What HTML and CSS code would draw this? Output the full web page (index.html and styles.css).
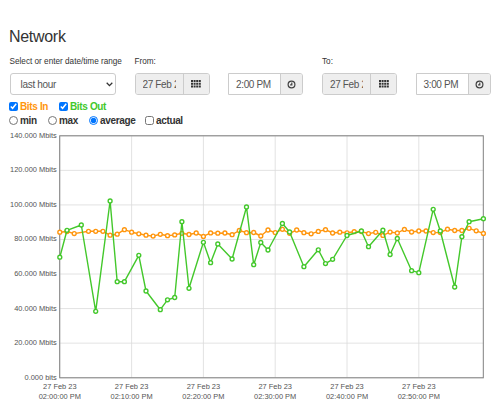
FILE: index.html
```html
<!DOCTYPE html>
<html lang="en">
<head>
    <meta charset="UTF-8">
    <meta name="viewport" content="width=device-width, initial-scale=1.0">
    <title>Network</title>
    <link rel="stylesheet" href="styles.css">
</head>
<body>
    <h2 class="title">Network</h2>

    <div class="range-row">
        <div class="range-column range-select">
            <label for="range">Select or enter date/time range</label>
            <div class="select-box" id="range">
                <span>last hour</span>
                <svg class="chevron" width="7" height="5" viewBox="0 0 7 5"><path d="M0.7 0.8 L3.5 3.6 L6.3 0.8"/></svg>
            </div>
        </div>
        <div class="range-column range-date">
            <label>From:</label>
            <div class="inputs">
                <div class="input-group">
                    <div class="field date"><span>27 Feb 2023</span></div>
                    <div class="addon">
                        <svg width="10" height="8" viewBox="0 0 10 8"><path d="M0 0h2v2H0zM2.6 0h2v2h-2zM5.2 0h2v2h-2zM7.8 0h2v2h-2zM0 2.7h2v2H0zM2.6 2.7h2v2h-2zM5.2 2.7h2v2h-2zM7.8 2.7h2v2h-2zM0 5.4h2v2H0zM2.6 5.4h2v2h-2zM5.2 5.4h2v2h-2zM7.8 5.4h2v2h-2z"/></svg>
                    </div>
                </div>
                <div class="input-group time-group">
                    <div class="field time"><span>2:00 PM</span></div>
                    <div class="addon time-addon">
                        <svg class="clock" width="9" height="9" viewBox="0 0 9 9"><circle cx="4.5" cy="4.5" r="3.4"/><path d="M4.8 2.5v2.3H3.1"/></svg>
                    </div>
                </div>
            </div>
        </div>
        <div class="range-column">
            <label>To:</label>
            <div class="inputs">
                <div class="input-group">
                    <div class="field date"><span>27 Feb 2023</span></div>
                    <div class="addon">
                        <svg width="10" height="8" viewBox="0 0 10 8"><path d="M0 0h2v2H0zM2.6 0h2v2h-2zM5.2 0h2v2h-2zM7.8 0h2v2h-2zM0 2.7h2v2H0zM2.6 2.7h2v2h-2zM5.2 2.7h2v2h-2zM7.8 2.7h2v2h-2zM0 5.4h2v2H0zM2.6 5.4h2v2h-2zM5.2 5.4h2v2h-2zM7.8 5.4h2v2h-2z"/></svg>
                    </div>
                </div>
                <div class="input-group time-group">
                    <div class="field time"><span>3:00 PM</span></div>
                    <div class="addon time-addon">
                        <svg class="clock" width="9" height="9" viewBox="0 0 9 9"><circle cx="4.5" cy="4.5" r="3.4"/><path d="M4.8 2.5v2.3H3.1"/></svg>
                    </div>
                </div>
            </div>
        </div>
    </div>

    <div class="checks series-checks">
        <label class="bits-in"><input type="checkbox" checked>Bits In</label>
        <label class="bits-out"><input type="checkbox" checked>Bits Out</label>
    </div>
    <div class="checks mode-checks">
        <label class="min"><input type="radio" name="mode"><span>min</span></label>
        <label class="max"><input type="radio" name="mode"><span>max</span></label>
        <label class="average"><input type="radio" name="mode" checked><span>average</span></label>
        <label class="actual"><input type="checkbox"><span>actual</span></label>
    </div>

    <svg class="chart" id="chart" width="500" height="275" viewBox="0 130 500 275">
        <defs>
            <marker id="dotIn" markerUnits="userSpaceOnUse" markerWidth="8" markerHeight="8" refX="4" refY="4"><circle class="dot in" cx="4" cy="4" r="1.95"/></marker>
            <marker id="dotOut" markerUnits="userSpaceOnUse" markerWidth="8" markerHeight="8" refX="4" refY="4"><circle class="dot out" cx="4" cy="4" r="1.95"/></marker>
        </defs>
        <g id="grid"></g>
        <rect class="frame" x="59.7" y="135.8" width="423.6" height="242"/>
        <polyline class="line in" id="lineIn"/>
        <polyline class="line out" id="lineOut"/>
    </svg>

    <script src="chart.js"></script>
</body>
</html>
```
FILE: styles.css
```css
html, body {
    margin: 0;
    padding: 0;
}

body {
    height: 403px;
    overflow: hidden;
    background: #fff;
    color: #333;
    font-family: "Liberation Sans", Arial, sans-serif;
    font-size: 10px;
}

.title {
    height: 20px;
    margin: 27px 0 0 9px;
    font-size: 16px;
    font-weight: normal;
    letter-spacing: -0.3px;
    line-height: 20px;
}

.range-row {
    display: flex;
    margin: 9px 0 0 9.5px;
}

.range-column label {
    display: block;
    height: 12px;
    font-size: 8.2px;
    line-height: 12px;
    white-space: nowrap;
}

.range-select {
    width: 125px;
}

.range-date {
    width: 187.5px;
}

.select-box {
    display: flex;
    align-items: center;
    justify-content: space-between;
    box-sizing: border-box;
    width: 106.5px;
    height: 22px;
    margin-top: 5px;
    padding: 0 2px 0 10px;
    border: 1px solid #ccc;
    border-radius: 3px;
    color: #555;
    font-size: 10px;
    letter-spacing: -0.3px;
}

.chevron {
    fill: none;
    stroke: #333;
    stroke-width: 1.3;
}

.inputs {
    display: flex;
    margin-top: 5px;
}

.input-group {
    display: flex;
    box-sizing: border-box;
    width: 75px;
    height: 22px;
    border: 1px solid #ccc;
    border-radius: 3px;
    overflow: hidden;
    color: #555;
    font-size: 10px;
    letter-spacing: -0.35px;
}

.time-group {
    margin-left: 18.5px;
    border-radius: 0 3px 3px 0;
}

.field {
    box-sizing: border-box;
    width: 47px;
    padding: 0 7px;
    line-height: 21px;
    white-space: nowrap;
}

.field span {
    display: block;
    overflow: hidden;
}

.date {
    background: #eee;
}

.time {
    width: 51px;
}

.time span {
    overflow: visible;
}

.addon {
    display: flex;
    align-items: center;
    justify-content: center;
    flex: 1;
    border-left: 1px solid #ccc;
    background: #eee;
}

.addon svg {
    fill: #333;
}

.addon .clock {
    fill: none;
    stroke: #444;
    stroke-width: 1.2;
}

.checks {
    display: flex;
    margin-left: 9px;
    font-weight: bold;
    letter-spacing: -0.35px;
}

.checks label {
    display: flex;
    align-items: center;
    white-space: nowrap;
}

.checks input {
    width: 9px;
    height: 9px;
    margin: 0 2px 0 0;
}

.series-checks {
    height: 12px;
    margin-top: 5px;
}

.mode-checks {
    height: 14px;
    margin-top: 1px;
}

.mode-checks span {
    padding-top: 1px;
}

.bits-in {
    width: 50px;
    color: #ff960e;
}

.bits-out {
    color: #43c82b;
}

.min {
    width: 39px;
}

.max {
    width: 41px;
}

.average {
    width: 56px;
}

.chart {
    display: block;
    margin-top: 3px;
}

.chart text {
    fill: #545454;
    font-size: 7.45px;
}

.grid-line {
    stroke: #dadada;
    stroke-width: 0.8;
}

.frame {
    fill: none;
    stroke: #808080;
    stroke-width: 1;
}

.line {
    fill: none;
    stroke-width: 1.4;
    stroke-linejoin: round;
}

.dot {
    fill: #fff;
    stroke-width: 1.4;
}

.in {
    stroke: #ff960e;
}

.out {
    stroke: #43c82b;
}

#lineIn {
    marker: url(#dotIn);
}

#lineOut {
    marker: url(#dotOut);
}
```
FILE: chart.js
```js
var LEFT = 59.8;
var RIGHT = 483.4;
var TOP = 135.8;
var BOTTOM = 377.7;
var MINUTE = 7.18;

// [minute, height on chart]
var bitsIn = [
    [0, 232.2], [1, 231.5], [2, 233.6], [4, 231.3], [5, 231.3], [6, 231.3], [7, 235.2], [8, 234.2], [9, 229.7],
    [10, 232.2], [11, 233.8], [12, 235.2], [13, 236.1], [14, 234.3], [15, 235.7], [16, 234.9], [17, 233.3],
    [18, 234.5], [19, 233], [20, 236.4], [21, 232.9], [22, 233.2], [23, 233], [24, 234.7], [25, 230.5],
    [26, 232.7], [27, 232.5], [28, 236], [29, 230], [30, 232.6], [31, 229.3], [32, 233.3], [33, 230],
    [34, 232.7], [35, 233.8], [36, 231.4], [37, 229.7], [38, 233], [39, 232.2], [40, 232.8], [41, 231.7],
    [42, 231.5], [43, 233.6], [44, 232.3], [45, 235.4], [46, 232.1], [47, 233], [48, 229.4], [49, 232],
    [50, 231], [51, 231], [52, 232.6], [53, 232.5], [54, 229.2], [55, 230.5], [56, 230.5], [57, 228.3],
    [58, 230.8], [59, 233.4]
];
var bitsOut = [
    [0, 257.2], [1, 230.3], [3, 225], [5, 311.3], [7, 201], [8, 281.7], [9, 281.7], [11, 255.3], [12, 291],
    [14, 309.7], [15, 299.8], [16, 297.5], [17, 221.7], [18, 288.3], [20, 242.3], [21, 262.7], [22, 244],
    [24, 259], [26, 207], [27, 264.7], [28, 242.5], [29, 250], [31, 223.5], [32, 232], [34, 266.7],
    [36, 249.8], [37, 263.6], [38, 259.3], [40, 235.5], [42, 231], [43, 246.7], [45, 230.2], [46, 254.5],
    [47, 238.5], [49, 270.7], [50, 272.7], [52, 209.3], [53, 231], [55, 287], [56, 236.7], [57, 221.7],
    [59, 218.7]
];

var grid = document.getElementById('grid');

function add(tag, attrs, text) {
    var el = document.createElementNS('http://www.w3.org/2000/svg', tag);
    for (var key in attrs) {
        el.setAttribute(key, attrs[key]);
    }
    if (text) {
        el.textContent = text;
    }
    grid.appendChild(el);
}

function drawSeries(id, data) {
    var points = data.map(function (p) {
        return (LEFT + p[0] * MINUTE).toFixed(1) + ',' + p[1];
    });
    document.getElementById(id).setAttribute('points', points.join(' '));
}

// Horizontal lines and labels
for (var i = 0; i <= 7; i++) {
    var y = BOTTOM - i * (BOTTOM - TOP) / 7;
    add('line', {'class': 'grid-line', x1: LEFT, x2: RIGHT, y1: y, y2: y});
    add('text', {x: 56.8, y: y + 2, 'text-anchor': 'end'}, i ? i * 20 + '.000 Mbits' : '0.000 bits');
}

// Vertical lines and times
for (var m = 0; m < 60; m += 10) {
    var x = LEFT + m * MINUTE;
    add('line', {'class': 'grid-line', x1: x, x2: x, y1: TOP, y2: BOTTOM});
    add('text', {x: x, y: 388.5, 'text-anchor': 'middle'}, '27 Feb 23');
    add('text', {x: x, y: 399.3, 'text-anchor': 'middle'}, '02:' + (m || '00') + ':00 PM');
}

drawSeries('lineIn', bitsIn);
drawSeries('lineOut', bitsOut);
```
